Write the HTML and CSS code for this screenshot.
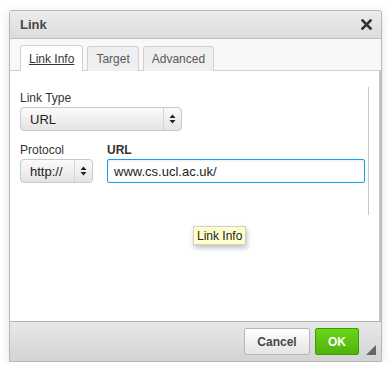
FILE: index.html
```html
<!DOCTYPE html>
<html>
<head>
<meta charset="utf-8">
<link rel="stylesheet" href="styles.css">
</head>
<body>
<div class="dialog">
  <div class="titlebar">
    <span class="title">Link</span>
    <span class="close">
      <svg width="11" height="11" viewBox="0 0 11 11"><path d="M1.5 1.5 L9.5 9.5 M9.5 1.5 L1.5 9.5" stroke="#333" stroke-width="2.6" stroke-linecap="square"/></svg>
    </span>
  </div>
  <div class="tabs">
    <div class="tab active"><span class="u">Link Info</span></div>
    <div class="tab">Target</div>
    <div class="tab">Advanced</div>
  </div>
  <div class="content">
    <div class="scrollline"></div>
    <div class="field">
      <div class="label">Link Type</div>
      <div class="select wide"><span class="val">URL</span><span class="arrows"><svg width="7" height="10" viewBox="0 0 7 10"><path d="M3.5 0.5 L6.5 4 L0.5 4 Z M0.5 6 L6.5 6 L3.5 9.5 Z" fill="#222"/></svg></span></div>
    </div>
    <div class="row">
      <div class="field">
        <div class="label">Protocol</div>
        <div class="select narrow"><span class="val">http://</span><span class="arrows"><svg width="7" height="10" viewBox="0 0 7 10"><path d="M3.5 0.5 L6.5 4 L0.5 4 Z M0.5 6 L6.5 6 L3.5 9.5 Z" fill="#222"/></svg></span></div>
      </div>
      <div class="field grow">
        <div class="label bold">URL</div>
        <div class="input">www.cs.ucl.ac.uk/</div>
      </div>
    </div>
    <div class="tooltip">Link Info</div>
  </div>
  <div class="footer">
    <div class="btn cancel">Cancel</div>
    <div class="btn ok">OK</div>
    <span class="grip"></span>
  </div>
</div>
</body>
</html>
```
FILE: styles.css
```css
* { box-sizing: border-box; }
body {
  margin: 0;
  background: #fff;
  font-family: "Liberation Sans", Arial, sans-serif;
  color: #333;
}
.dialog {
  margin: 10px 0 0 9px;
  width: 373px;
  height: 352px;
  border: 1px solid #b8b8b8;
  border-radius: 3px 3px 0 0;
  box-shadow: 0 2px 10px rgba(0,0,0,0.12);
  display: flex;
  flex-direction: column;
  background: #fff;
}
.titlebar {
  height: 28px;
  background: linear-gradient(#ececec, #dcdcdc);
  border-bottom: 1px solid #bebebe;
  display: flex;
  align-items: center;
  justify-content: space-between;
  padding: 0 9px 0 10px;
  border-radius: 3px 3px 0 0;
}
.title {
  font-weight: bold;
  font-size: 13px;
  color: #474747;
}
.close { display: flex; }
.tabs {
  height: 32px;
  background: #f8f8f8;
  border-bottom: 1px solid #d1d1d1;
  display: flex;
  align-items: flex-end;
  padding-left: 10px;
  gap: 4px;
}
.tab {
  height: 25px;
  margin-bottom: -1px;
  padding: 0 8px;
  font-size: 12px;
  color: #595959;
  background: #efefef;
  border: 1px solid #d1d1d1;
  border-bottom: none;
  border-radius: 3px 3px 0 0;
  display: flex;
  align-items: center;
}
.tab.active {
  background: #fff;
  color: #333;
  height: 26px;
}
.u { text-decoration: underline; }
.content {
  flex: 1;
  position: relative;
  padding: 20px 14px 0 10px;
  border-right: 2px solid #c4c4c4;
}
.scrollline {
  position: absolute;
  right: 10px;
  top: 16px;
  width: 1px;
  height: 128px;
  background: #c8c8c8;
}
.label {
  font-size: 12px;
  color: #333;
  height: 14px;
  line-height: 14px;
}
.label.bold { font-weight: bold; }
.field { display: flex; flex-direction: column; gap: 2px; }
.grow { flex: 1; }
.row {
  display: flex;
  gap: 14px;
  margin-top: 12px;
}
.select {
  height: 24px;
  border: 1px solid #c9c9c9;
  border-radius: 4px;
  background: linear-gradient(#fbfbfb, #e4e4e4);
  display: flex;
  align-items: center;
  font-size: 13px;
  color: #222;
}
.select .val { flex: 1; padding-left: 9px; }
.select .arrows {
  width: 18px;
  height: 100%;
  border-left: 1px solid #d5d5d5;
  display: flex;
  align-items: center;
  justify-content: center;
}
.select.wide { width: 162px; }
.select.narrow { width: 73px; }
.input {
  height: 24px;
  border: 1px solid #139ff7;
  border-radius: 2px;
  font-size: 13px;
  color: #222;
  padding-left: 6px;
  display: flex;
  align-items: center;
  box-shadow: inset 0 1px 2px rgba(0,0,0,0.08);
}
.tooltip {
  position: absolute;
  left: 183px;
  top: 155px;
  height: 19px;
  padding: 0 3px;
  font-size: 12px;
  color: #222;
  background: #ffffcc;
  border: 1px solid #d0d0d0;
  box-shadow: 1px 3px 5px rgba(0,0,0,0.25);
  display: flex;
  align-items: center;
}
.footer {
  height: 40px;
  border-top: 1px solid #b3b3b3;
  background: linear-gradient(#e8e8e8, #d2d3d3);
  display: flex;
  align-items: center;
  justify-content: flex-end;
  padding-right: 22px;
  gap: 5px;
  position: relative;
}
.btn {
  height: 27px;
  border-radius: 2px;
  font-size: 12px;
  font-weight: bold;
  display: flex;
  align-items: center;
  justify-content: center;
}
.cancel {
  width: 66px;
  border: 1px solid #b6b6b6;
  background: linear-gradient(#ffffff, #e4e4e4);
  color: #474747;
}
.ok {
  width: 44px;
  border: 1px solid #3f9a06;
  background: linear-gradient(#6ad619, #4fb30a);
  color: #fff;
}
.grip {
  position: absolute;
  right: 5px;
  bottom: 6px;
  width: 0;
  height: 0;
  border-left: 10px solid transparent;
  border-bottom: 10px solid #666;
}
```
